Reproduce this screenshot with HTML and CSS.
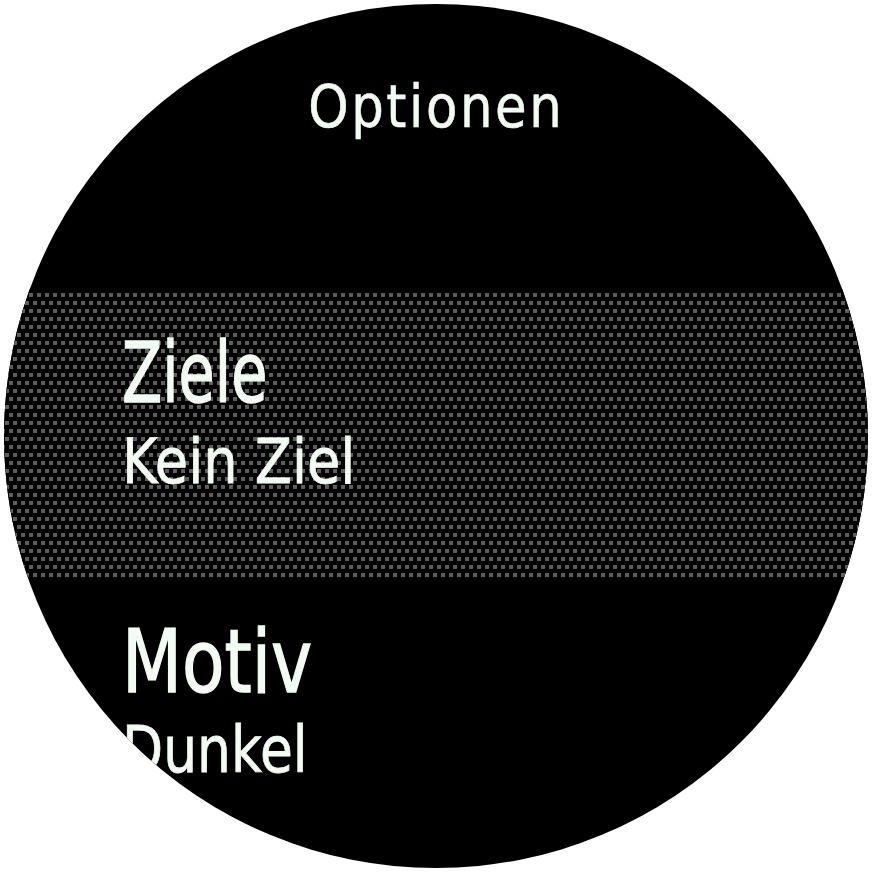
FILE: index.html
```html
<!DOCTYPE html>
<html lang="de">
<head>
<meta charset="utf-8">
<title>Optionen</title>
<link rel="stylesheet" href="styles.css">
</head>
<body>
<div class="watch">
  <div class="title"><span class="txt">Optionen</span></div>
  <div class="item selected">
    <div class="label"><span class="txt">Ziele</span></div>
    <div class="value"><span class="txt">Kein Ziel</span></div>
  </div>
  <div class="item second">
    <div class="label"><span class="txt">Motiv</span></div>
    <div class="value"><span class="txt">Dunkel</span></div>
  </div>
</div>
</body>
</html>
```
FILE: styles.css
```css
html, body {
  margin: 0;
  padding: 0;
  background: #ffffff;
}
body {
  width: 872px;
  height: 872px;
  overflow: hidden;
}
.watch {
  margin: 4px;
  width: 864px;
  height: 864px;
  border-radius: 50%;
  overflow: hidden;
  background: #000;
  color: #f2fcf2;
  font-family: "DejaVu Sans", sans-serif;
  display: flex;
  flex-direction: column;
}
.txt {
  display: inline-block;
  white-space: nowrap;
  transform-origin: 0 50%;
}
.title {
  margin-top: 73px;
  font-size: 59px;
  line-height: 59px;
  text-align: center;
}
.title .txt {
  letter-spacing: 3px;
  transform: scaleX(0.87);
  transform-origin: 50% 50%;
  -webkit-text-stroke: 0.6px currentColor;
}
.item {
  padding-left: 118px;
}
.selected {
  margin-top: 153px;
  height: 288px;
  box-sizing: border-box;
  padding-top: 42px;
  background-color: #000;
  background-image:
    conic-gradient(from 90deg at 4px 12px, #5e5e5e 90deg, transparent 0),
    conic-gradient(from 90deg at 4px 12px, #5e5e5e 90deg, transparent 0);
  background-size: 8px 16px, 8px 16px;
  background-position: -3px -8px, 1px 0;
}
.selected .label {
  font-size: 84px;
  line-height: 84px;
}
.selected .label .txt {
  transform: scaleX(0.70);
  -webkit-text-stroke: 1.4px currentColor;
}
.selected .value {
  margin-top: 15px;
  font-size: 63px;
  line-height: 63px;
}
.selected .value .txt {
  transform: scaleX(0.86);
  -webkit-text-stroke: 0.8px currentColor;
}
.second {
  margin-top: 41px;
}
.second .label {
  font-size: 88px;
  line-height: 88px;
}
.second .label .txt {
  transform: scaleX(0.79);
  -webkit-text-stroke: 1.4px currentColor;
}
.second .value {
  margin-top: 12px;
  font-size: 64px;
  line-height: 64px;
}
.second .value .txt {
  transform: scaleX(0.835);
  -webkit-text-stroke: 0.8px currentColor;
}
```
